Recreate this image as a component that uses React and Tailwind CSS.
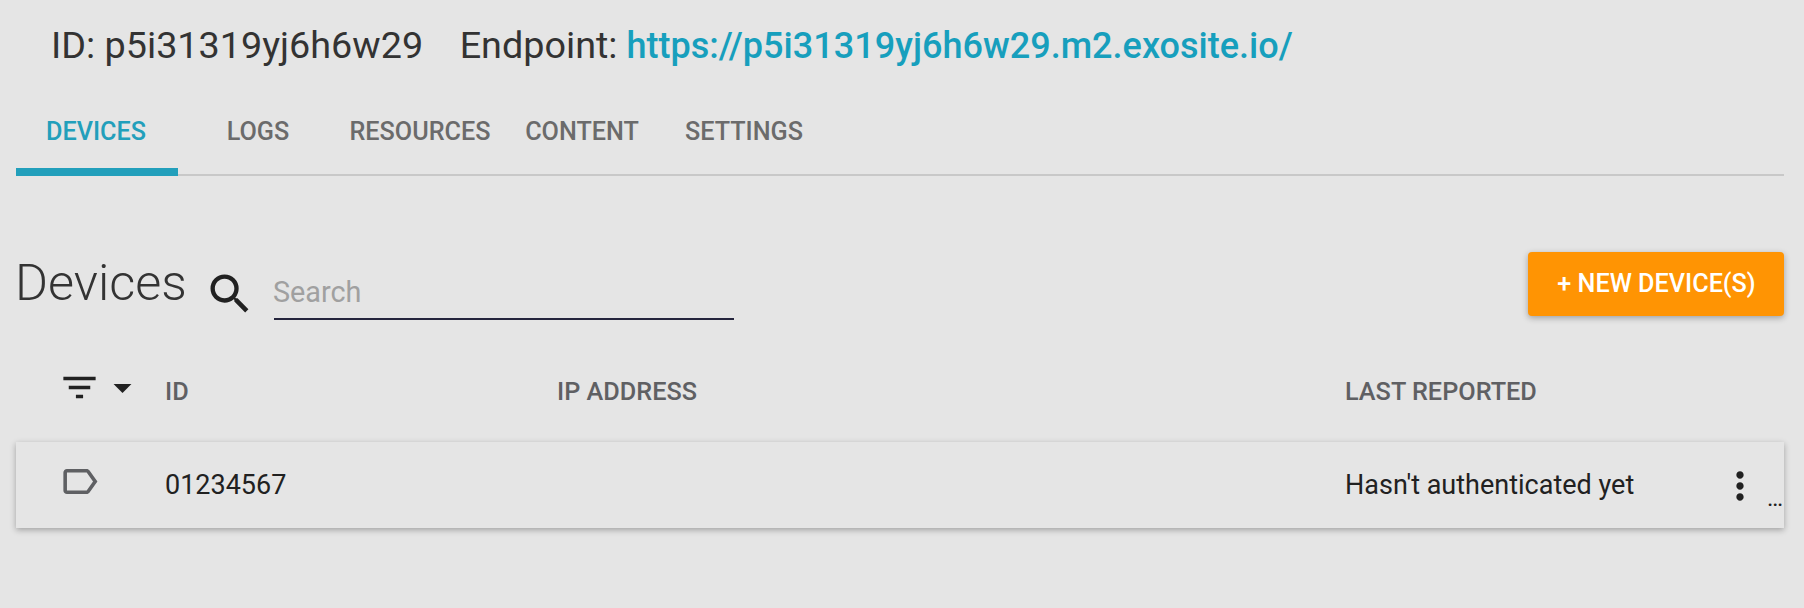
import React from "react";
import { MdSearch, MdFilterList, MdArrowDropDown, MdLabelOutline, MdMoreVert } from "react-icons/md";

const tabs = ["DEVICES", "LOGS", "RESOURCES", "CONTENT", "SETTINGS"];

function Header() {
  return (
    <header className="flex h-[90px] items-center pb-px pl-[35px] text-[37.75px] leading-[38px] text-[#333333]">
      <span>ID: p5i31319yj6h6w29</span>
      <span className="ml-[36.5px]">Endpoint:</span>
      <a className="ml-[9px] pt-[2px] text-[36.05px] font-medium leading-[36px] text-[#179fbd]">https://p5i31319yj6h6w29.m2.exosite.io/</a>
    </header>
  );
}

function Tabs() {
  return (
    <nav className="flex h-[86px] text-[25.2px] font-medium leading-[26px] text-[#6b6b6b] shadow-[inset_0_-2px_0_#c8c8c8]">
      {tabs.map((t, i) => (
        <div
          key={t}
          className={
            i === 0
              ? "flex w-[162px] items-center justify-center border-b-8 border-[#229fbb] pr-[2px] pt-[6px] text-[#229fbb]"
              : "flex w-[162px] items-center justify-center pb-[2px] pr-[2px]"
          }
        >
          {t}
        </div>
      ))}
    </nav>
  );
}

function Toolbar() {
  return (
    <div className="mt-[76px] flex h-[68px] items-start">
      <h1 className="-ml-px w-[189px] text-[50.4px] font-light leading-[62px] text-[#333333]">Devices</h1>
      <MdSearch className="mt-[16px] size-[52px] text-[#212121]" />
      <div className="ml-[18px] h-[68px] w-[460px] border-b-2 border-[#25253d] pt-[20px] text-[28.8px] leading-[41px] text-[#a0a0a0]">
        <span className="-ml-px">Search</span>
      </div>
      <button className="ml-auto h-16 w-64 rounded-[4px] bg-[#ff9403] pl-px text-[25.2px] font-medium leading-[26px] text-white shadow-[0_2px_6px_rgba(0,0,0,0.3)]">
        + NEW DEVICE(S)
      </button>
    </div>
  );
}

function Table() {
  return (
    <section className="text-[27px] leading-[28px] text-[#212121]">
      <div className="flex h-[122px] items-center pt-[21px] text-[25.25px] font-medium text-[#5f6063]">
        <div className="flex w-[149px] items-center pb-[8px] pl-[41.7px] text-[#212121]">
          <MdFilterList className="size-[43px]" />
          <MdArrowDropDown className="size-[43px]" />
        </div>
        <div className="w-[392px]">ID</div>
        <div className="w-[788px]">IP ADDRESS</div>
        <div>LAST REPORTED</div>
      </div>
      <div className="flex h-[86px] items-center shadow-[0_2px_6px_rgba(0,0,0,0.3)]">
        <div className="w-[149px] pb-[7px] pl-[41.7px]">
          <MdLabelOutline className="size-[43px] text-[#5f6063]" />
        </div>
        <div className="w-[1180px]">01234567</div>
        <div className="w-[373px]">Hasn't authenticated yet</div>
        <MdMoreVert className="mt-[2px] size-[44px] shrink-0" />
        <div className="ml-auto pr-px pt-[26px] text-[24px]">…</div>
      </div>
    </section>
  );
}

export default function App() {
  return (
    <main className="h-[608px] w-[1804px] overflow-hidden bg-[#e5e5e5] pl-[16px] pr-[20px] font-['Roboto',sans-serif]">
      <Header />
      <Tabs />
      <Toolbar />
      <Table />
    </main>
  );
}
